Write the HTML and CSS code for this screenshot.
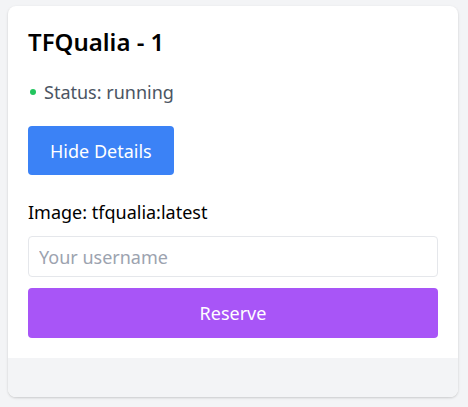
FILE: index.html
```html
<!DOCTYPE html>
<html>
<head>
<meta charset="utf-8">
<link rel="stylesheet" href="styles.css">
</head>
<body>
<div class="card">
  <div class="card-body">
    <h2 class="title">TFQualia - 1</h2>
    <div class="status"><span class="dot"></span><span>Status: running</span></div>
    <button class="btn btn-blue">Hide Details</button>
    <div class="image">Image: tfqualia:latest</div>
    <input class="input" type="text" placeholder="Your username">
    <button class="btn btn-purple">Reserve</button>
  </div>
  <div class="card-footer"></div>
</div>
</body>
</html>
```
FILE: styles.css
```css
html, body {
  margin: 0;
  padding: 0;
  background: #f3f4f6;
}
body {
  padding: 6px 10px 10px 8px;
  font-family: "Noto Sans", "Open Sans", sans-serif;
}
.card {
  width: 450px;
  background: #fff;
  border-radius: 8px;
  box-shadow: 0 1px 3px rgba(0,0,0,0.12), 0 1px 2px rgba(0,0,0,0.06);
  overflow: hidden;
}
.card-body {
  padding: 20px;
  display: flex;
  flex-direction: column;
  align-items: flex-start;
}
.title {
  margin: 0;
  font-size: 24px;
  line-height: 32px;
  font-weight: 600;
  color: #000;
}
.status {
  margin-top: 20px;
  display: flex;
  align-items: center;
  font-size: 18px;
  line-height: 28px;
  color: #4b5563;
}
.dot {
  width: 6px;
  height: 6px;
  border-radius: 50%;
  background: #22c55e;
  margin: 0 8px 0 2px;
}
.btn {
  border: none;
  font-family: inherit;
  font-size: 18px;
  line-height: 28px;
  color: #fff;
  border-radius: 4px;
  cursor: pointer;
}
.btn-blue {
  margin-top: 20px;
  height: 49px;
  padding: 0 22px;
  background: #3b82f6;
}
.image {
  margin-top: 23px;
  font-size: 18px;
  line-height: 28px;
  color: #000;
}
.input {
  margin-top: 10px;
  box-sizing: border-box;
  width: 100%;
  height: 41px;
  border: 1px solid #e5e7eb;
  border-radius: 4px;
  padding: 0 10px;
  font-family: inherit;
  font-size: 18px;
  outline: none;
}
.input::placeholder {
  color: #9ca3af;
}
.btn-purple {
  margin-top: 11px;
  width: 100%;
  height: 50px;
  background: #a855f7;
}
.card-footer {
  height: 39px;
  background: #f3f4f6;
}
```
